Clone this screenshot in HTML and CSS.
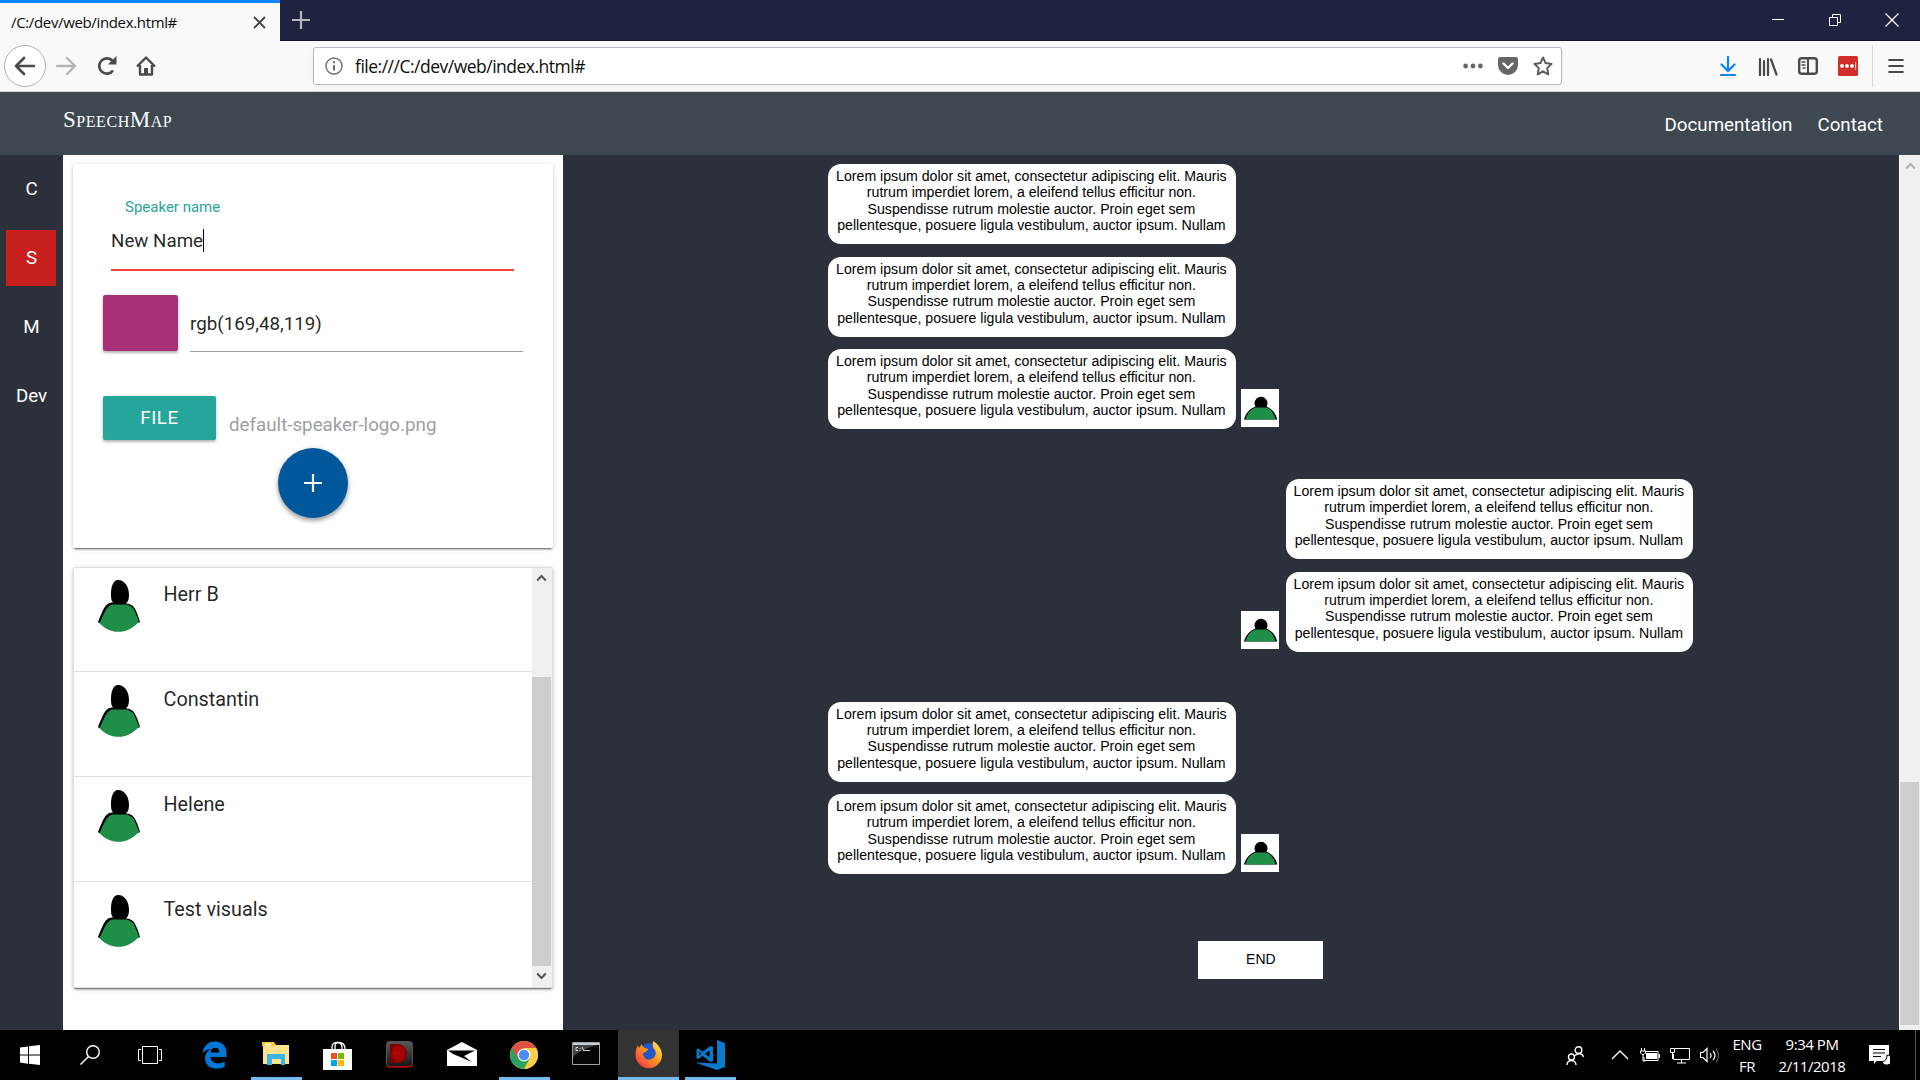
FILE: index.html
```html
<!DOCTYPE html>
<html lang="en">
<head>
<meta charset="utf-8">
<title>SpeechMap</title>
<link rel="stylesheet" href="styles.css">
</head>
<body>
<svg class="defs" width="0" height="0">
  <symbol id="speaker" viewBox="0 0 42 53"><path d="M20 0c7 0 11 7 11 15 0 4-1 7-3 8.500 8 0 10 6 14 18.500l-2 1H1l-1-1C7 25 8 23 15 22.500c-2-2-2-5-2-8.500C13 7 15 0 20 0z" fill="#000"/><path d="M14 24.500h15c3 1 6 3 7 5l5 12C30 55.500 11 54.500 1.500 43 7 32 8 27 14 24.500z" fill="#1e8e49"/></symbol>
  <symbol id="avatar" viewBox="0 0 38 38"><circle cx="20" cy="14.300" r="6.500"/><path d="M3 30.500h33v-1C34 22 28 18 24 17.500h-9C10 19 5 23 3 30.500z"/><path d="M4.500 30.500C6 24 11 18.500 16 18.500h8c5 0 9 6 10.500 12z" fill="#1e8e49"/></symbol>
</svg>
<div class="screen">
  <div class="tabstrip">
    <div class="tab"><span class="t-tab">/C:/dev/web/index.html#</span><svg width="13" height="13" viewBox="0 0 13 13"><path d="M1 1l11 11M12 1L1 12" stroke="#444" stroke-width="1.800"/></svg></div>
    <svg class="newtab" width="18" height="18" viewBox="0 0 18 18"><path d="M9 0v18M0 9h18" stroke="#b5b5c3" stroke-width="2.200"/></svg>
    <div class="winbtns">
      <svg width="14" height="14" viewBox="0 0 14 14"><path d="M1 6.500h12" stroke="#fff"/></svg>
      <svg width="14" height="14" viewBox="0 0 14 14" fill="none" stroke="#fff"><path d="M1.500 4.500h8v8h-8zM4.500 4.500v-3h8v8h-3"/></svg>
      <svg width="14" height="14" viewBox="0 0 14 14"><path d="M.5 .5l13 13M13.500 .5l-13 13" stroke="#fff" stroke-width="1.200"/></svg>
    </div>
  </div>
  <div class="toolbar">
    <div class="back"><svg width="22" height="20" viewBox="0 0 22 20" fill="none" stroke="#4a4a4a" stroke-width="2.600" stroke-linecap="round" stroke-linejoin="round"><path d="M20 10H2M10 2l-8 8 8 8"/></svg></div>
    <svg class="fwd" width="22" height="20" viewBox="0 0 22 20" fill="none" stroke="#b4b4b4" stroke-width="2.400" stroke-linecap="round" stroke-linejoin="round"><path d="M1 10h18M11 2l8 8-8 8"/></svg>
    <svg class="reload" width="20" height="20" viewBox="0 0 20 20"><path d="M16 14.500A7.600 7.600 0 1 1 15.600 5" fill="none" stroke="#4a4a4a" stroke-width="2.700"/><path d="M19.500 0v8.500H11z" fill="#4a4a4a"/></svg>
    <svg class="home" width="20" height="20" viewBox="0 0 20 20"><path d="M1 10.500L10 1.500l9 9M4 9v9.500h12V9" fill="none" stroke="#4a4a4a" stroke-width="2.400" stroke-linejoin="round"/><path d="M8 19v-7h4v7z" fill="#4a4a4a"/></svg>
    <div class="url">
      <svg width="18" height="18" viewBox="0 0 18 18"><circle cx="9" cy="9" r="8" fill="none" stroke="#707070" stroke-width="1.400"/><path d="M9 8v5.500M9 4.200v2" stroke="#707070" stroke-width="2"/></svg>
      <span class="t-url">file:///C:/dev/web/index.html#</span>
      <svg class="dots" width="20" height="6" viewBox="0 0 20 6" fill="#666"><circle cx="2.600" cy="3" r="2.400"/><circle cx="10" cy="3" r="2.400"/><circle cx="17.400" cy="3" r="2.400"/></svg>
      <svg class="pocket" width="20" height="18" viewBox="0 0 20 18"><path d="M2 0h16q2 0 2 2v6a10 10 0 0 1-20 0V2q0-2 2-2z" fill="#666"/><path d="M5.500 6.500L10 11l4.500-4.500" fill="none" stroke="#fff" stroke-width="2.400" stroke-linecap="round" stroke-linejoin="round"/></svg>
      <svg width="20" height="20" viewBox="0 0 20 20"><path d="M10 1.500l2.600 5.600 6 .8-4.400 4.200 1.100 6.200L10 15.300l-5.300 3 1.100-6.200L1.400 7.900l6-.8z" fill="none" stroke="#5c5c5c" stroke-width="2" stroke-linejoin="round"/></svg>
    </div>
    <div class="tools">
      <svg class="download" width="16" height="20" viewBox="0 0 16 20" fill="none" stroke="#0a84ff" stroke-width="2.200" stroke-linecap="round"><path d="M8 1v13M1.500 8.500L8 15l6.500-6.500M1 19h14"/></svg>
      <svg width="20" height="19" viewBox="0 0 20 19" stroke="#4a4a4a" stroke-width="2.200" stroke-linecap="round"><path d="M2 2v16M6 4v14M10 2v16M13 2.500L18.500 17.500" fill="none"/></svg>
      <svg width="20" height="18" viewBox="0 0 20 18" fill="none" stroke="#4a4a4a"><rect x="1.200" y="1.200" width="17.600" height="15.600" rx="2.500" stroke-width="2.400"/><path d="M10 1v16" stroke-width="2"/><path d="M3.500 5h4M3.500 8h4M4.500 11h3" stroke-width="1.300"/></svg>
      <svg width="20" height="20" viewBox="0 0 20 20"><rect width="20" height="20" rx="1.500" fill="#d32d27"/><g fill="#fff"><circle cx="4" cy="10" r="1.900"/><circle cx="9" cy="10" r="1.900"/><circle cx="14" cy="10" r="1.900"/><path d="M17.300 6h.8v8h-.8z"/></g></svg>
      <svg class="menu" width="16" height="16" viewBox="0 0 16 16" stroke="#4a4a4a" stroke-width="2.200" stroke-linecap="round"><path d="M1.200 2h13.600M1.200 8h13.600M1.200 14h13.600"/></svg>
    </div>
  </div>
  <header class="header">
    <a class="logo">SpeechMap</a>
    <nav><a>Documentation</a><a>Contact</a></nav>
  </header>
  <main class="main">
    <nav class="side"><a>C</a><a class="active">S</a><a>M</a><a>Dev</a></nav>
    <section class="panel">
      <form class="card form">
        <label class="lbl">Speaker name</label>
        <div class="name"><span>New Name</span><i class="caret"></i></div>
        <div class="color"><div class="swatch"></div><div class="rgb">rgb(169,48,119)</div></div>
        <div class="file"><div class="btn">FILE</div><span class="path">default-speaker-logo.png</span></div>
        <div class="add"><svg width="18" height="18" viewBox="0 0 18 18"><path d="M9 0v18M0 9h18" stroke="#fff" stroke-width="2.200"/></svg></div>
      </form>
      <div class="card list">
        <ul>
          <li><svg width="42" height="53"><use href="#speaker"/></svg><span>Herr B</span></li>
          <li><svg width="42" height="53"><use href="#speaker"/></svg><span>Constantin</span></li>
          <li><svg width="42" height="53"><use href="#speaker"/></svg><span>Helene</span></li>
          <li><svg width="42" height="53"><use href="#speaker"/></svg><span>Test visuals</span></li>
        </ul>
        <div class="sb sb-list"><svg width="11" height="8" viewBox="0 0 11 8"><path d="M1.200 6.500l4.300-4.500 4.300 4.500" fill="none" stroke="#555" stroke-width="2"/></svg><div class="thumb"></div><svg width="11" height="8" viewBox="0 0 11 8"><path d="M1.200 1.500l4.300 4.500 4.300-4.500" fill="none" stroke="#555" stroke-width="2"/></svg></div>
      </div>
    </section>
    <section class="map">
      <div class="group left">
        <div class="bubbles">
          <p>Lorem ipsum dolor sit amet, consectetur adipiscing elit. Mauris<br>rutrum imperdiet lorem, a eleifend tellus efficitur non.<br>Suspendisse rutrum molestie auctor. Proin eget sem<br>pellentesque, posuere ligula vestibulum, auctor ipsum. Nullam</p>
          <p>Lorem ipsum dolor sit amet, consectetur adipiscing elit. Mauris<br>rutrum imperdiet lorem, a eleifend tellus efficitur non.<br>Suspendisse rutrum molestie auctor. Proin eget sem<br>pellentesque, posuere ligula vestibulum, auctor ipsum. Nullam</p>
          <p>Lorem ipsum dolor sit amet, consectetur adipiscing elit. Mauris<br>rutrum imperdiet lorem, a eleifend tellus efficitur non.<br>Suspendisse rutrum molestie auctor. Proin eget sem<br>pellentesque, posuere ligula vestibulum, auctor ipsum. Nullam</p>
        </div>
        <svg class="av" width="38" height="38"><use href="#avatar"/></svg>
      </div>
      <div class="group right">
        <svg class="av" width="38" height="38"><use href="#avatar"/></svg>
        <div class="bubbles">
          <p>Lorem ipsum dolor sit amet, consectetur adipiscing elit. Mauris<br>rutrum imperdiet lorem, a eleifend tellus efficitur non.<br>Suspendisse rutrum molestie auctor. Proin eget sem<br>pellentesque, posuere ligula vestibulum, auctor ipsum. Nullam</p>
          <p>Lorem ipsum dolor sit amet, consectetur adipiscing elit. Mauris<br>rutrum imperdiet lorem, a eleifend tellus efficitur non.<br>Suspendisse rutrum molestie auctor. Proin eget sem<br>pellentesque, posuere ligula vestibulum, auctor ipsum. Nullam</p>
        </div>
      </div>
      <div class="group left">
        <div class="bubbles">
          <p>Lorem ipsum dolor sit amet, consectetur adipiscing elit. Mauris<br>rutrum imperdiet lorem, a eleifend tellus efficitur non.<br>Suspendisse rutrum molestie auctor. Proin eget sem<br>pellentesque, posuere ligula vestibulum, auctor ipsum. Nullam</p>
          <p>Lorem ipsum dolor sit amet, consectetur adipiscing elit. Mauris<br>rutrum imperdiet lorem, a eleifend tellus efficitur non.<br>Suspendisse rutrum molestie auctor. Proin eget sem<br>pellentesque, posuere ligula vestibulum, auctor ipsum. Nullam</p>
        </div>
        <svg class="av" width="38" height="38"><use href="#avatar"/></svg>
      </div>
      <div class="end">END</div>
    </section>
    <div class="sb sb-page"><svg width="11" height="8" viewBox="0 0 11 8"><path d="M1.200 6.500l4.300-4.500 4.300 4.500" fill="none" stroke="#b0b0b0" stroke-width="2"/></svg><div class="thumb"></div></div>
  </main>
  <footer class="taskbar">
    <div class="sys"><svg width="20" height="20" viewBox="0 0 20 20" fill="#fff"><path d="M0 2.500L8 1.400V9.500H0zM9 1.300L20 0v9.500H9zM0 10.500h8v8.200L0 17.600zM9 10.500h11V20L9 18.700z"/></svg></div>
    <div class="sys"><svg width="20" height="20" viewBox="0 0 20 20" fill="none" stroke="#fff" stroke-width="1.400"><circle cx="13" cy="7" r="6.300"/><path d="M8.500 11.500L.5 19.500"/></svg></div>
    <div class="sys view"><svg width="24" height="18" viewBox="0 0 24 18" fill="none" stroke="#fff"><path d="M4.500 .5h15v17h-15zM3 3.500H.5v11H3M21 3.500h2.500v11H21"/></svg></div>
    <div class="app"><svg width="25" height="28" viewBox="0 0 25 28"><path d="M.5 12.500C1.500 5 6 .5 13 .5c7.500 0 11.500 5 11.500 11.500V16H8.500c0 4.500 4 6.300 7.500 6.300 3 0 5-.8 6.700-1.800v5.300c-2.400 1.300-5 1.800-8 1.800C7.500 27.600 3 23.500 3 17.500c0-4 2.200-7.600 6-9.500-4 .2-7 2.200-8.500 4.500zM8.600 11.600h8.700c.2-3-1.500-4.800-4.200-4.800-2.500 0-4.200 2-4.500 4.800z" fill="#0078d7"/></svg></div>
    <div class="app run"><svg class="up" width="28" height="24" viewBox="0 0 28 24"><path d="M1 1h11l2 2h13v19H1z" fill="#ffe391"/><path d="M0 0h12l2 3-1 1H0z" fill="#fdc62c"/><path d="M3 1.500h6v2H3z" fill="#fff"/><path d="M5 12h18v11h-4v-6h-9v6H5z" fill="#3cb4e7"/></svg></div>
    <div class="app store"><svg width="29" height="29" viewBox="0 0 29 29"><path d="M9 8V6c0-6 10-6 10 0v2M12 8V5c0-5 9-5 10 2v1" fill="none" stroke="#fff" stroke-width="1.300"/><path d="M0 8h29v21H0z" fill="#fff"/><path d="M8 12h6v6H8z" fill="#f25022"/><path d="M15 12h6v6h-6z" fill="#7fba00"/><path d="M8 19h6v6H8z" fill="#00a4ef"/><path d="M15 19h6v6h-6z" fill="#ffb900"/></svg></div>
    <div class="app"><svg class="up" width="27" height="28" viewBox="0 0 27 28"><defs><radialGradient id="dg"><stop offset="0" stop-color="#e01010"/><stop offset="1" stop-color="#7d0000"/></radialGradient><linearGradient id="db" x2="0" y2="1"><stop offset="0" stop-color="#5a5a5a"/><stop offset="1" stop-color="#151515"/></linearGradient></defs><rect x=".5" y="1.500" width="26" height="25" rx="3" fill="url(#db)" stroke="#555"/><path d="M4 4h8c12 1 12 18 0 19H4z" fill="url(#dg)"/><path d="M6 8l6-2 7 4-4 5 3 4-9 2 3-4-7 1 6-5z" fill="#a50505"/><path d="M1 27h20l5-1" stroke="#b00" stroke-width="1.500" fill="none"/></svg></div>
    <div class="app"><svg class="up" width="30" height="24" viewBox="0 0 30 24"><path d="M0 8L15 0l15 8v16H0z" fill="#fff"/><path d="M1 8.500h27l-11 5.500 8 6L6 12z" fill="#000"/></svg></div>
    <div class="app run"><svg width="28" height="28" viewBox="0 0 28 28"><circle cx="14" cy="14" r="14" fill="#ffcd46"/><path d="M14 14L1.880 7A14 14 0 0 0 14 28l6-10.500z" fill="#2aa15d"/><path d="M1.880 7A14 14 0 0 1 26.120 7L14 7.500 8 17.500z" fill="#dd5044"/><path d="M14 7h12.100A14 14 0 0 1 14 28l6-10.500z" fill="#ffcd46"/><circle cx="14" cy="14" r="6.500" fill="#fff"/><circle cx="14" cy="14" r="5.200" fill="#4c8bf5"/></svg></div>
    <div class="app"><svg class="up" width="28" height="23" viewBox="0 0 28 23"><path d="M.5 .5h27v22H.5z" fill="#050505" stroke="#9da3a8"/><path d="M1 2h26" stroke="#c7ccd0" stroke-width="2"/><path d="M1 3h25C18 5 8 8 1 15z" fill="#444"/><g fill="none" stroke="#ddd" stroke-width="1"><path d="M6 5.500H4v3h2M8 6v1M8 8v1M10 5l2 4M12 8.500h6"/></g></svg></div>
    <div class="app run on"><svg width="28" height="28" viewBox="0 0 28 28"><defs><linearGradient id="ff" x1="1" x2="0" y2="1"><stop offset="0" stop-color="#fff44f"/><stop offset=".45" stop-color="#ff9a1f"/><stop offset="1" stop-color="#f0244f"/></linearGradient></defs><circle cx="14" cy="12" r="10" fill="#2456c7"/><path d="M18 0c5 3 9 8 9 14a13.200 13.200 0 0 1-26.500 0C.5 9 2 6 3 4l1 3 3-4c0 3 2 4 6 5-1 3-3 3-5 4 0 5 4 8 8 6 5-1 6-7 3-10-2-3-1-6-1-8z" fill="url(#ff)"/></svg></div>
    <div class="app run vs"><svg width="30" height="30" viewBox="0 0 30 30" fill="#0a7bcb"><path d="M22 0l8 3v24l-8 3L0 22.500l22 1z"/><path d="M15.500 6L18 7v14l-2.500 1L7.500 15.800 3.500 19 1.500 18V9.500l2-1 4 3.200zM4 11.500v4.500l2.300-2.300zM14.500 10.500L10 13.800l4.500 3.400z" fill-rule="evenodd"/></svg></div>
    <div class="tray">
      <svg class="people" width="18" height="19" viewBox="0 0 18 19" fill="none" stroke="#fff" stroke-width="1.400"><circle cx="12.500" cy="4" r="3.300"/><circle cx="5.500" cy="11" r="3"/><path d="M1 19c0-6 9-6 9 0M9 9.500c3-3 8-2 8.300 1.500"/></svg>
      <svg class="chev" width="18" height="10" viewBox="0 0 18 10" fill="none" stroke="#fff" stroke-width="1.400"><path d="M1 9l8-8 8 8"/></svg>
      <svg class="bat" width="20" height="14" viewBox="0 0 20 14"><path d="M5 3.500h13v9H4V9" fill="none" stroke="#fff"/><path d="M6 5h11v6H6zM18.500 6H20v4h-1.500z" fill="#fff"/><path d="M1.500 0v3M4.500 0v3M.5 3h5v2L4 6.500H2L.5 5zM3 6v7h2" fill="none" stroke="#fff"/></svg>
      <svg class="net" width="20" height="17" viewBox="0 0 20 17" fill="none" stroke="#fff"><path d="M5 1.500h14.500v11h-16V7M11.500 12.500V16M7 16h9M.5 1.500h4v4h-4zM2.500 5v7"/></svg>
      <svg class="vol" width="21" height="17" viewBox="0 0 21 17" fill="none" stroke="#fff"><path d="M.5 5.500H3l4-4v13l-4-4H.5zM10 6q2 2.500 0 5M13 4q4 4.500 0 9" stroke-width="1.200"/><path d="M16 1.500q5 7 0 14" stroke="#777"/></svg>
      <div class="lang"><span>ENG</span><span>FR</span></div>
      <div class="clock"><span>9:34 PM</span><span>2/11/2018</span></div>
      <svg class="note" width="21" height="20" viewBox="0 0 21 20"><path d="M0 0h20v16H7.500L5 19v-3H0z" fill="#fff"/><path d="M4 4.500h12M4 8h12M4 11.500h8" stroke="#000" stroke-width="1.200"/><path d="M18 10a5 5 0 1 1-5 6.500q5 0 5-6.500z" fill="#fff" stroke="#000"/></svg>
      <i class="desk"></i>
    </div>
  </footer>
</div>
</body>
</html>
```
FILE: styles.css
```css
* { box-sizing: border-box; }
body { margin: 0; overflow: hidden; font-family: Roboto, sans-serif; }
svg { display: block; flex: none; }
.defs { position: absolute; }
p, ul { margin: 0; padding: 0; list-style: none; }
.screen { width: 1920px; height: 1080px; display: flex; flex-direction: column; background: #2c303a; }

/* Browser chrome */
.tabstrip { height: 41px; flex: none; display: flex; background: #202340; border-bottom: 1px solid #12142b; }
.tab { width: 280px; height: 41px; background: #f9f9fa; border-top: 3px solid #0a84ff; padding: 0 14px 0 11px; display: flex; align-items: center; justify-content: space-between; }
.t-tab { font: 15px "Open Sans", sans-serif; letter-spacing: -.35px; color: #0c0c0d; }
.newtab { margin: 11px 0 0 12px; }
.winbtns { margin: 13px 21px 0 auto; display: flex; gap: 43px; }
.toolbar { height: 51px; flex: none; background: #f9f9fa; border-bottom: 1px solid #d4d4d6; display: flex; align-items: center; }
.back { width: 42px; height: 42px; margin-left: 4px; border: 1px solid #b1b1b1; border-radius: 50%; background: #fff; display: flex; align-items: center; justify-content: center; }
.fwd { margin-left: 10px; }
.reload { margin-left: 19px; }
.home { margin-left: 19px; }
.url { width: 1249px; height: 38px; margin-left: 157px; border: 1px solid #b9b9bb; border-radius: 3px; background: #fff; display: flex; align-items: center; padding: 0 8px 0 11px; box-shadow: 0 1px 4px rgba(0,0,0,.06); }
.t-url { font: 17.500px "Open Sans", sans-serif; letter-spacing: -.5px; color: #0c0c0d; margin: 0 auto 0 12px; }
.pocket { margin: 0 15px 0 15px; }
.tools { flex: 1; height: 42px; display: flex; align-items: center; justify-content: flex-end; gap: 20px; padding-right: 16px; }
.download { margin-right: 2px; }
.tools .menu { box-sizing: content-box; border-left: 1px solid #d7d7db; padding: 13px 0 13px 15px; margin-left: -6px; }

/* Application header */
.header { height: 63px; flex: none; background: #3e4851; color: #fff; display: flex; justify-content: space-between; padding: 0 37px 0 63px; }
.logo { font: small-caps 23px "Liberation Serif", serif; letter-spacing: .55px; margin-top: 15px; }
.header nav { display: flex; gap: 25px; font-size: 18.750px; line-height: 66px; }
.main { height: 875px; display: flex; }
.side { width: 63px; padding: 6px 6px 0; display: flex; flex-direction: column; gap: 13px; }
.side a { height: 56px; width: 50px; padding-left: 1px; color: #fff; font-size: 18.750px; line-height: 56px; text-align: center; white-space: nowrap; }
.side .active { background: #c81f1f; }

/* Speaker panel */
.panel { width: 500px; background: #fff; padding: 9px 10px 0; display: flex; flex-direction: column; gap: 19px; }
.card { background: #fff; border-radius: 2px; box-shadow: 0 2px 2px rgba(0,0,0,.14), 0 3px 1px -2px rgba(0,0,0,.35), 0 1px 5px rgba(0,0,0,.18); }
.form { height: 384px; padding: 31px 30px 0; font-size: 18.750px; color: rgba(0,0,0,.87); }
.lbl { display: block; font-size: 15px; line-height: 24px; padding-left: 22px; color: #26a69a; }
.name { margin: 0 9px 0 8px; height: 52px; padding-top: 7px; border-bottom: 2px solid #f44336; display: flex; line-height: 30px; }
.caret { width: 1px; height: 23px; margin-top: 3px; background: #000; }
.color { display: flex; gap: 12px; margin-top: 24px; height: 57px; }
.swatch { width: 75px; height: 56px; border-radius: 2px; background: #a93077; box-shadow: 0 2px 2px rgba(0,0,0,.2), 0 1px 5px rgba(0,0,0,.15); }
.rgb { flex: 1; border-bottom: 1px solid #9e9e9e; line-height: 59px; }
.file { display: flex; gap: 13px; margin-top: 44px; height: 44px; }
.btn { width: 113px; height: 44px; border-radius: 2px; background: #26a69a; color: #fff; text-align: center; line-height: 44px; letter-spacing: .6px; box-shadow: 0 2px 2px rgba(0,0,0,.2), 0 1px 5px rgba(0,0,0,.15); }
.path { color: #9e9e9e; line-height: 58px; }
.add { width: 70px; height: 70px; margin: 8px auto 0; border-radius: 50%; background: #01579b; display: flex; align-items: center; justify-content: center; box-shadow: 0 3px 4px rgba(0,0,0,.3), 0 1px 6px rgba(0,0,0,.15); }
.list { height: 421px; border: 1px solid #e0e0e0; display: flex; }
.list ul { flex: 1; }
.list li { height: 105px; border-bottom: 1px solid #e0e0e0; display: flex; gap: 23.500px; padding: 13px 0 0 24px; font-size: 19.800px; line-height: 29px; color: rgba(0,0,0,.87); }
.list li:first-child { height: 104px; padding-top: 12px; }
.list li:last-child { border: 0; }
.sb { background: #f0f0f0; display: flex; flex-direction: column; align-items: center; }
.sb .thumb { align-self: stretch; background: #cdcdcd; }
.sb-list { width: 20px; padding: 6px 1px 0 0; }
.sb-list .thumb { height: 289px; margin: 95px 0 6px; }

/* Conversation map */
.map { flex: 1; padding: 9px 0 0 265.400px; font-family: "Liberation Sans", sans-serif; font-size: 14.150px; color: #000; }
.group { display: flex; align-items: flex-end; gap: 5px; margin-bottom: 49.750px; width: 865px; }
.group.right { justify-content: flex-end; gap: 6.500px; }
.bubbles { display: flex; flex-direction: column; gap: 12.250px; }
.bubbles p { width: 407.500px; height: 80.250px; border-radius: 13px; background: #fff; text-align: center; white-space: nowrap; line-height: 16.400px; padding: 4px 1.500px 0 0; }
.av { background: #fff; margin-bottom: 2.500px; }
.end { width: 125px; height: 38px; margin: 66.250px 0 0 370px; background: #fff; text-align: center; font-size: 14px; line-height: 37px; }
.sb-page { width: 21px; border-left: 1px solid #fff; padding-top: 7px; }
.sb-page .thumb { margin: 612px 1px 0 0; height: 243px; }

/* Taskbar */
.taskbar { height: 50px; flex: none; background: #000; color: #fff; display: flex; }
.sys, .app { display: flex; align-items: center; justify-content: center; }
.sys { width: 60px; }
.view { margin-right: 3px; }
.app { width: 62px; position: relative; }
.app .up { margin: 0 1px 3px 0; }
.store { padding-right: 1px; }
.run::after { content: ""; position: absolute; left: 6px; right: 5px; bottom: 0; height: 3px; background: #76b9ed; }
.on { background: #333; width: 61px; margin-left: 1px; }
.on::after { left: 0; right: 0; }
.tray { flex: 1; display: flex; align-items: center; font: 15px/22px "Open Sans", sans-serif; letter-spacing: -.45px; }
.people { margin-left: 825px; }
.chev { margin-left: 27px; }
.bat { margin-left: 11px; }
.net { margin-left: 10px; }
.vol { margin-left: 10px; }
.lang, .clock { display: flex; flex-direction: column; align-items: center; }
.lang { margin-left: 12px; width: 28px; }
.clock { margin-left: 17px; width: 68px; white-space: nowrap; }
.note { margin-left: 23px; }
.desk { width: 1px; height: 50px; background: #555; margin-left: 25px; }
```
